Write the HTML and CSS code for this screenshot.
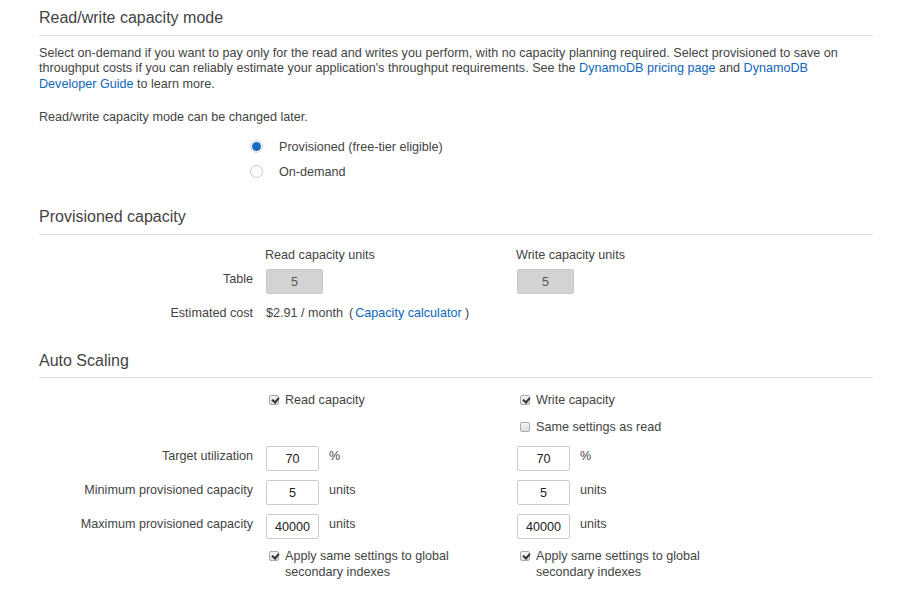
FILE: index.html
```html
<!DOCTYPE html>
<html>
<head>
<meta charset="utf-8">
<link rel="stylesheet" href="styles.css">
</head>
<body>
<div class="page">
  <h2 class="sec-title first">Read/write capacity mode</h2>
  <p class="intro">Select on-demand if you want to pay only for the read and writes you perform, with no capacity planning required. Select provisioned to save on throughput costs if you can reliably estimate your application's throughput requirements. See the <a href="#">DynamoDB pricing page</a> and <a href="#">DynamoDB Developer Guide</a> to learn more.</p>
  <p class="note">Read/write capacity mode can be changed later.</p>
  <div class="radios">
    <label class="radio-row"><span class="radio on"></span><span>Provisioned (free-tier eligible)</span></label>
    <label class="radio-row"><span class="radio"></span><span>On-demand</span></label>
  </div>

  <h2 class="sec-title sec2">Provisioned capacity</h2>
  <div class="frow head-row">
    <div></div>
    <div class="colhead">Read capacity units</div>
    <div class="colhead">Write capacity units</div>
  </div>
  <div class="frow table-row">
    <div class="flabel">Table</div>
    <div><span class="box gray">5</span></div>
    <div><span class="box gray">5</span></div>
  </div>
  <div class="frow cost-row">
    <div class="flabel plain">Estimated cost</div>
    <div class="cost">$2.91 / month<span class="paren">(</span><a href="#">Capacity calculator</a> )</div>
    <div></div>
  </div>

  <h2 class="sec-title sec3">Auto Scaling</h2>
  <div class="frow cb-row">
    <div></div>
    <div class="cb"><span class="check on"></span><span>Read capacity</span></div>
    <div class="cb"><span class="check on"></span><span>Write capacity</span></div>
  </div>
  <div class="frow cb-row2">
    <div></div>
    <div></div>
    <div class="cb"><span class="check"></span><span>Same settings as read</span></div>
  </div>
  <div class="frow in-row first-in">
    <div class="flabel">Target utilization</div>
    <div class="field"><span class="box">70</span><span class="unit">%</span></div>
    <div class="field"><span class="box">70</span><span class="unit">%</span></div>
  </div>
  <div class="frow in-row">
    <div class="flabel">Minimum provisioned capacity</div>
    <div class="field"><span class="box">5</span><span class="unit">units</span></div>
    <div class="field"><span class="box">5</span><span class="unit">units</span></div>
  </div>
  <div class="frow in-row">
    <div class="flabel">Maximum provisioned capacity</div>
    <div class="field"><span class="box">40000</span><span class="unit">units</span></div>
    <div class="field"><span class="box">40000</span><span class="unit">units</span></div>
  </div>
  <div class="frow apply-row">
    <div></div>
    <div class="cb"><span class="check on"></span><span class="wrap">Apply same settings to global secondary indexes</span></div>
    <div class="cb"><span class="check on"></span><span class="wrap">Apply same settings to global secondary indexes</span></div>
  </div>
</div>
</body>
</html>
```

FILE: styles.css
```css
html, body {
  margin: 0;
  padding: 0;
  background: #ffffff;
}
body {
  font-family: "Liberation Sans", Arial, sans-serif;
  font-size: 12.6px;
  color: #444444;
}
.page {
  width: 834px;
  padding: 7px 0 0 39px;
}
a {
  color: #1166bb;
  text-decoration: none;
}
.sec-title {
  margin: 0;
  font-size: 16px;
  font-weight: normal;
  line-height: 20px;
  padding-top: 1px;
  padding-bottom: 7px;
  border-bottom: 1px solid #dddddd;
  color: #444444;
}
.sec2 { margin-top: 22px; }
.sec3 { margin-top: 29px; padding-bottom: 6px; }
.intro {
  margin: 10px 0 0 0;
  max-width: 810px;
  line-height: 15.3px;
}
.note {
  margin: 18px 0 0 0;
  line-height: 15.3px;
}
.radios {
  margin-top: 9px;
  padding-left: 211px;
}
.radio-row {
  display: flex;
  align-items: center;
  height: 25px;
  gap: 16px;
}
.radio {
  width: 11px;
  height: 11px;
  border: 1px solid #c8c8c8;
  border-radius: 50%;
  background: #ffffff;
  box-sizing: content-box;
  position: relative;
}
.radio.on {
  border-color: #c9d6e6;
}
.radio.on::after {
  content: "";
  position: absolute;
  left: 1px;
  top: 1px;
  width: 9px;
  height: 9px;
  border-radius: 50%;
  background: #1a6cc0;
}
.frow {
  display: grid;
  grid-template-columns: 227px 251px 1fr;
  line-height: 16px;
}
.flabel {
  text-align: right;
  padding-right: 13px;
  padding-top: 2px;
}
.flabel.plain { padding-top: 0; }
.head-row { margin-top: 12px; }
.colhead { margin-left: -1px; }
.table-row { margin-top: 6px; }
.box {
  display: inline-flex;
  align-items: center;
  justify-content: center;
  box-sizing: border-box;
  width: 53px;
  height: 25px;
  border: 1px solid #cccccc;
  border-radius: 2px;
  background: #ffffff;
  color: #222222;
  font-size: 12.6px;
}
.box.gray {
  width: 57px;
  background: #d3d3d3;
  border-color: #c9c9c9;
  color: #555555;
}
.cost-row { margin-top: 11px; }
.cost { white-space: nowrap; }
.paren { margin-left: 6px; margin-right: 2px; }
.cb {
  display: flex;
  align-items: flex-start;
  gap: 6px;
  padding-left: 3px;
}
.check {
  flex: none;
  width: 10px;
  height: 10px;
  margin-top: 3px;
  box-sizing: border-box;
  border: 1px solid #a9a9a9;
  border-radius: 2px;
  background: linear-gradient(#f4f4f4, #dedede);
  position: relative;
}
.check.on::after {
  content: "";
  position: absolute;
  left: 2.5px;
  top: 0px;
  width: 3px;
  height: 5px;
  border: solid #333333;
  border-width: 0 2px 2px 0;
  transform: rotate(40deg);
}
.cb-row { margin-top: 14px; }
.cb-row2 { margin-top: 11px; }
.in-row { margin-top: 9px; }
.in-row.first-in { margin-top: 11px; }
.field {
  display: flex;
  align-items: flex-start;
}
.unit {
  margin-left: 10px;
  padding-top: 2px;
}
.apply-row { margin-top: 9px; }
.wrap { width: 175px; }
```
